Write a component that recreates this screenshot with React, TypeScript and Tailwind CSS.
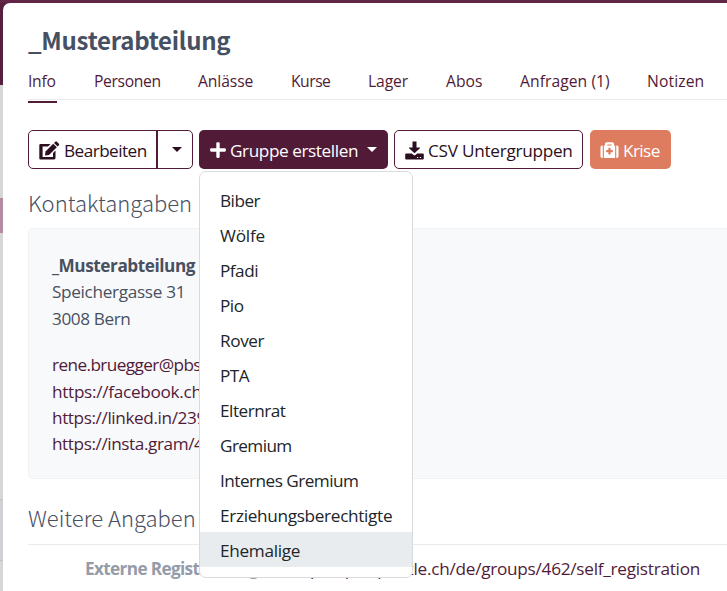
import { FaPlus, FaMedkit } from "react-icons/fa";

const tabs = [
  { label: "Info", width: "w-[66px]", tracking: "tracking-[-0.3px]" },
  { label: "Personen", width: "w-[104px]", tracking: "tracking-[-0.35px]" },
  { label: "Anlässe", width: "w-[93px]", tracking: "tracking-[-0.1px]" },
  { label: "Kurse", width: "w-[77px]", tracking: "tracking-[-0.5px]" },
  { label: "Lager", width: "w-[78px]", tracking: "tracking-[-0.1px]" },
  { label: "Abos", width: "w-[74px]", tracking: "tracking-[0px]" },
  { label: "Anfragen (1)", width: "w-[127px]", tracking: "tracking-[0.05px]" },
  { label: "Notizen", width: "w-[70px]", tracking: "tracking-[0.1px]" },
];

const groups = [
  { label: "Biber", tracking: "tracking-[-0.5px]" },
  { label: "Wölfe", tracking: "tracking-[-0.2px]" },
  { label: "Pfadi", tracking: "tracking-[-0.5px]" },
  { label: "Pio", tracking: "tracking-[-0.5px]" },
  { label: "Rover", tracking: "tracking-[-0.4px]" },
  { label: "PTA", tracking: "tracking-[-0.5px]" },
  { label: "Elternrat", tracking: "tracking-[-0.5px]" },
  { label: "Gremium", tracking: "tracking-[-0.6px]" },
  { label: "Internes Gremium", tracking: "tracking-[-0.53px]" },
  { label: "Erziehungsberechtigte", tracking: "tracking-[-0.32px]" },
  { label: "Ehemalige", tracking: "tracking-[-0.3px]" },
];

const links = [
  { label: "rene.bruegger@pbs.ch", tracking: "tracking-[-0.6px]" },
  { label: "https://facebook.ch", tracking: "tracking-[-0.3px]" },
  { label: "https://linked.in/239", tracking: "tracking-[-0.4px]" },
  { label: "https://insta.gram/456", tracking: "tracking-[-0.42px]" },
];

function Caret() {
  return <span className="h-0 w-0 border-x-[5px] border-t-[5px] border-x-transparent border-t-current" />;
}

function EditIcon() {
  return (
    <svg viewBox="0 0 21 19" className="mt-px mr-[4px] h-[19px] w-[21px]" fill="currentColor">
      <path d="M1.5 3H11.5L9 5.6H3.6V15.9H14V12L16.5 9.5V17Q16.5 18.4 15.1 18.4H1.5Q.3 18.4 .3 17.2V4.2Q.3 3 1.5 3Z" />
      <path d="M14.2 2.7L17.8 6.3L10 14L6 14.5L6.5 10.4Z" />
      <path d="M15 1.9L16.3 .7Q17.1 0 17.9 .7L19.9 2.7Q20.6 3.5 19.9 4.2L18.6 5.5Z" />
    </svg>
  );
}

function DownloadIcon() {
  return (
    <svg viewBox="0 0 19 19" className="mt-px mr-[4px] h-[19px] w-[19px]" fill="currentColor">
      <path d="M7.5 .5H11.5V6.5H14.8Q15.4 6.7 14.9 7.3L9.5 12.2L4.1 7.3Q3.6 6.7 4.2 6.5H7.5Z" />
      <path
        fillRule="evenodd"
        d="M1.2 12.6H6.8L8.6 14.1Q9.5 14.7 10.4 14.1L12.2 12.6H17.8Q18.8 12.6 18.8 13.6V17.5Q18.8 18.5 17.8 18.5H1.2Q.2 18.5 .2 17.5V13.6Q.2 12.6 1.2 12.6ZM12 15.9V17.1H13.2V15.9ZM14.9 15.9V17.1H16.1V15.9Z"
      />
    </svg>
  );
}

function Sidebar() {
  return (
    <div className="flex w-[3px] shrink-0 flex-col bg-[#d6d6d6]">
      <div className="h-[82px] bg-[#571f3f]" />
      <div className="h-[113px]" />
      <div className="h-[35px] bg-[#b58aa3]" />
      <div className="h-[266px]" />
      <div className="h-[62px] border-y border-[#c2c3c6] bg-[#d0d1d4]" />
    </div>
  );
}

function GroupMenu() {
  return (
    <div className="absolute top-[41px] left-0 z-10 w-[214px] rounded-[7px] border border-[#d9dadc] bg-white py-[10px] text-[#212529]">
      {groups.map((group) => (
        <div
          key={group.label}
          className={`flex h-[35px] items-center pt-[2px] pl-5 text-[17.2px] whitespace-nowrap ${group.tracking} ${
            group.label === "Ehemalige" ? "bg-[#e9ecef]" : ""
          }`}
        >
          {group.label}
        </div>
      ))}
    </div>
  );
}

export default function App() {
  return (
    <div className="flex h-[591px] w-[727px] flex-col overflow-hidden bg-[#612646] font-['Open_Sans','Noto_Sans',sans-serif] text-[#49505f]">
      <div className="h-[3px] shrink-0" />
      <div className="flex min-h-0 flex-1">
        <Sidebar />
        <div className="flex flex-1 bg-[#571f3f]">
          <main className="w-[724px] shrink-0 rounded-tl-[7px] bg-white pl-[25px]">
            <h1 className="flex h-[71px] items-center pt-[2px] font-['Noto_Sans_CJK_SC',sans-serif] text-[24px] font-bold tracking-[-0.25px] text-[#465062]">
              _Musterabteilung
            </h1>
            <nav className="flex h-[26px] border-b border-[#e9eaec] text-[15.7px] leading-[1] text-[#511b38]">
              {tabs.map((tab) => (
                <div key={tab.label} className={`${tab.width} ${tab.tracking} shrink-0 whitespace-nowrap`}>
                  <span className={tab.label === "Info" ? "inline-block h-[29px] w-[29px] border-b-2 border-[#511b38]" : ""}>
                    {tab.label}
                  </span>
                </div>
              ))}
            </nav>

            <div className="mt-[30px] flex h-[39px] text-[17.2px] whitespace-nowrap text-[#2b0f20]">
              <div className="flex w-[165px] rounded-[5px] border border-[#511b38]">
                <button className="flex w-[129px] items-center border-r-2 border-[#511b38] pl-[10px]">
                  <EditIcon />
                  <span className="pt-[2px] tracking-[-0.55px]">Bearbeiten</span>
                </button>
                <button className="flex flex-1 items-center justify-center pl-[3px]">
                  <Caret />
                </button>
              </div>
              <div className="relative ml-[6px] w-[189px]">
                <button className="flex h-full w-full items-center rounded-[5px] bg-[#511b38] pl-[10px] text-white">
                  <FaPlus className="mr-[3px] h-[18px] w-[18px]" />
                  <span className="w-[137px] pt-[2px] text-left tracking-[-0.42px]">Gruppe erstellen</span>
                  <Caret />
                </button>
                <GroupMenu />
              </div>
              <button className="ml-[6px] flex w-[189px] items-center rounded-[5px] border border-[#511b38] pl-[10px]">
                <DownloadIcon />
                <span className="pt-[2px] tracking-[-0.27px]">CSV Untergruppen</span>
              </button>
              <button className="ml-[7px] flex w-[81px] items-center rounded-[5px] bg-[#dd7c5f] pl-[10px] text-white">
                <FaMedkit className="mr-[4px] h-[18px] w-[19px]" />
                <span className="pt-[2px] tracking-[-0.6px]">Krise</span>
              </button>
            </div>

            <h2 className="mt-[13px] flex h-[40px] items-center font-['Noto_Sans_CJK_SC',sans-serif] text-[22px] font-light">
              Kontaktangaben
            </h2>
            <section className="mt-[6px] h-[251px] rounded-tl-[5px] rounded-bl-[5px] border border-r-0 border-[#f0f2f4] bg-[#f8f9fb] pt-[24px] pl-[23px] text-[17.2px] leading-[26.4px] whitespace-nowrap">
              <div className="font-bold tracking-[-0.45px]">_Musterabteilung</div>
              <div className="tracking-[-0.33px]">Speichergasse 31</div>
              <div className="tracking-[-0.4px]">3008 Bern</div>
              <div className="mt-[20px] text-[#511b38]">
                {links.map((link) => (
                  <div key={link.label} className={link.tracking}>
                    {link.label}
                  </div>
                ))}
              </div>
            </section>

            <h2 className="mt-[18px] flex h-[40px] items-center font-['Noto_Sans_CJK_SC',sans-serif] text-[22px] font-light">
              Weitere Angaben
            </h2>
            <div className="mt-[7px] flex h-[49px] items-center border-t border-[#e9eaec] pl-[57px] text-[17.2px] whitespace-nowrap">
              <div className="w-[185px] font-bold tracking-[-0.65px] text-[#959ba8]">Externe Registrierung</div>
              <div className="w-[430px] text-right tracking-[-0.26px] text-[#511b38]">
                https://pbs.puzzle.ch/de/groups/462/self_registration
              </div>
            </div>
          </main>
        </div>
      </div>
    </div>
  );
}
